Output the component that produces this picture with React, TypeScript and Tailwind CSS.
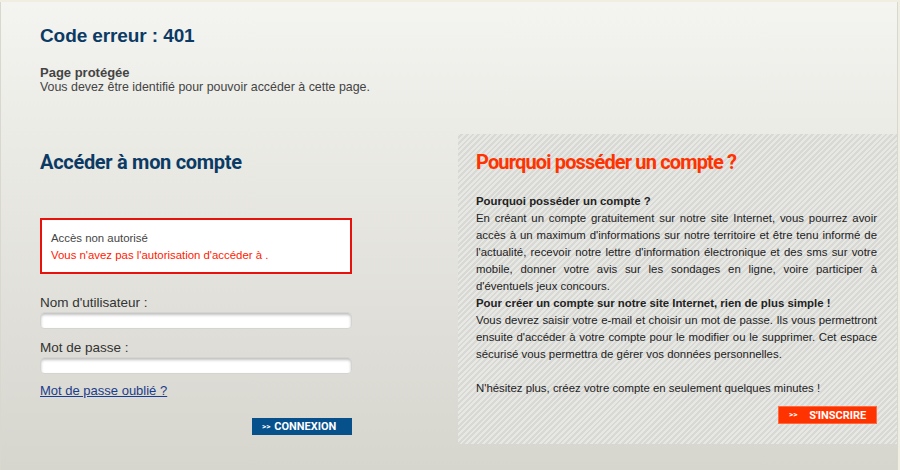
import React from 'react';

const sans = 'font-["Liberation_Sans",Arial,sans-serif]';
const display = 'font-["Roboto","DejaVu_Sans",sans-serif]';

const Field = ({ label }: { label: string }) => (
  <div className="flex flex-col">
    <label className="text-[13.5px] leading-[16px] text-[#333]">{label}</label>
    <input
      type="text"
      className="mt-[1px] h-[17px] w-[312px] rounded-[4px] border border-[#d4d4d0] bg-white shadow-[inset_0_2px_3px_rgba(0,0,0,0.25)] outline-none"
    />
  </div>
);

export default function App() {
  return (
    <div className={`${sans} h-[470px] w-[900px] overflow-hidden bg-[#f0eee2]`}>
      <div className="mt-[2px] h-[468px] w-[898px] border-l border-r border-[#d9d8cf] bg-gradient-to-b from-[#f4f4f0] to-[#d6d5ce]">
        {/* Header */}
        <div className="pl-[39px] pt-[23px]">
          <h1 className="text-[19px] font-bold leading-[22px] tracking-[-0.1px] text-[#0b3a64]">Code erreur : 401</h1>
          <p className="mt-[18px] text-[13px] font-bold leading-[15px] text-[#444]">Page protégée</p>
          <p className="text-[12.4px] leading-[15px] text-[#444]">Vous devez être identifié pour pouvoir accéder à cette page.</p>
        </div>

        <div className="mt-[39px] flex">
          {/* Login */}
          <div className="ml-[39px] w-[312px]">
            <h2 className={`${display} mt-[16px] text-[20px] font-bold leading-[24px] tracking-[-0.3px] text-[#0b3a64]`}>
              Accéder à mon compte
            </h2>

            <div className="mt-[44px] border-2 border-[#e8120c] bg-white px-[9px] pb-[8px] pt-[10px] text-[11.4px] leading-[17px]">
              <p className="text-[#444]">Accès non autorisé</p>
              <p className="text-[#ff1a00]">Vous n'avez pas l'autorisation d'accéder à .</p>
            </div>

            <div className="mt-[21px] flex flex-col gap-[11px]">
              <Field label="Nom d'utilisateur :" />
              <Field label="Mot de passe :" />
            </div>

            <a href="#" className="mt-[9px] block text-[13px] leading-[16px] text-[#1c3d8c] underline">
              Mot de passe oublié ?
            </a>

            <div className="mt-[19px] flex justify-end">
              <button className={`${display} flex h-[17px] w-[100px] items-center bg-[#06508c] pl-[10px] text-[11px] font-bold leading-none text-white`}>
                <span className="mr-[4px] text-[8px]">&gt;&gt;</span>CONNEXION
              </button>
            </div>
          </div>

          {/* Why an account */}
          <div className="ml-[106px] h-[310px] w-[441px] bg-[repeating-linear-gradient(135deg,#e7e7e4_0px,#e7e7e4_2px,#d8d8d5_2px,#d8d8d5_4px)] pl-[18px] pr-[20px] pt-[16px]">
            <h2 className={`${display} text-[20px] font-bold leading-[24px] tracking-[-0.85px] text-[#ff3300]`}>
              Pourquoi posséder un compte ?
            </h2>
            <div className="mt-[19px] text-justify text-[11.4px] leading-[17px] text-[#222]">
              <p className="font-bold">Pourquoi posséder un compte ?</p>
              <p>
                En créant un compte gratuitement sur notre site Internet, vous pourrez avoir accès à un maximum d'informations sur notre territoire et être tenu informé de l'actualité, recevoir notre lettre d'information électronique et des sms sur votre mobile, donner votre avis sur les sondages en ligne, voire participer à d'éventuels jeux concours.
              </p>
              <p className="font-bold">Pour créer un compte sur notre site Internet, rien de plus simple !</p>
              <p>
                Vous devrez saisir votre e-mail et choisir un mot de passe. Ils vous permettront ensuite d'accéder à votre compte pour le modifier ou le supprimer. Cet espace sécurisé vous permettra de gérer vos données personnelles.
              </p>
              <p className="mt-[17px]">N'hésitez plus, créez votre compte en seulement quelques minutes !</p>
            </div>
            <div className="mt-[9px] flex justify-end">
              <button className={`${display} flex h-[18px] w-[99px] items-center border border-[#ff6a40] bg-[#ff3300] pl-[10px] text-[11px] font-bold leading-none text-white`}>
                <span className="mr-[12px] text-[8px]">&gt;&gt;</span>S'INSCRIRE
              </button>
            </div>
          </div>
        </div>
      </div>
    </div>
  );
}
